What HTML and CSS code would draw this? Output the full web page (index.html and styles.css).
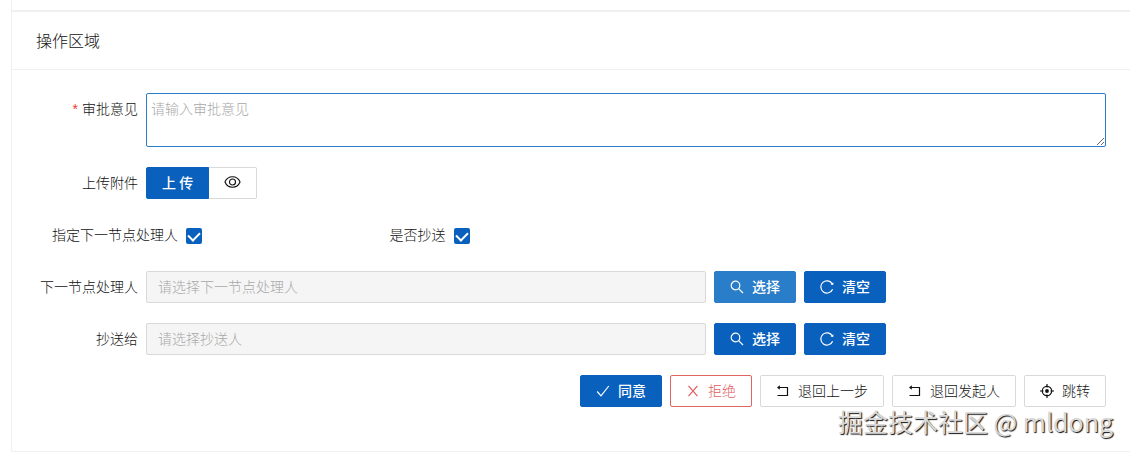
FILE: index.html
```html
<!DOCTYPE html>
<html lang="zh-CN">
<head>
<meta charset="utf-8">
<title>操作区域</title>
<link rel="stylesheet" href="styles.css">
</head>
<body>
<svg class="sprite" aria-hidden="true">
  <symbol id="i-eye" viewBox="0 0 18 18"><path d="M1 9C2.500 5.500 5.500 3.500 9 3.500S15.500 5.500 17 9C15.500 12.500 12.500 14.500 9 14.500S2.500 12.500 1 9z"/><circle cx="9" cy="9" r="3.200"/></symbol>
  <symbol id="i-search" viewBox="0 0 14 14"><circle cx="5.500" cy="5.500" r="4.300"/><path d="M8.600 8.600L13 13"/></symbol>
  <symbol id="i-reload" viewBox="0 0 14 14"><path d="M12.300 4A6.100 6.100 0 1 0 12.600 9.200"/><path d="M13.300 2.200v2.800l-2.800-.4z" fill="currentColor" stroke="none"/></symbol>
  <symbol id="i-check" viewBox="0 0 14 14"><path d="M1.200 7.500L5 11.900 12.800 2"/></symbol>
  <symbol id="i-close" viewBox="0 0 14 14"><path d="M2.500 1.800l9 10.400M11.500 1.800l-9 10.400"/></symbol>
  <symbol id="i-back" viewBox="0 0 14 14"><path d="M3 3.500h8.500v8H1.500"/><path d="M3.800 1.300v4.400L1 3.500z" fill="currentColor" stroke="none"/></symbol>
  <symbol id="i-aim" viewBox="0 0 14 14"><circle cx="7" cy="7" r="4.700"/><circle cx="7" cy="7" r="1.900" fill="currentColor" stroke="none"/><path d="M7 0v3.500M7 10.500V14M0 7h3.500M10.500 7H14"/></symbol>
</svg>

<div class="previous"></div>
<section class="card">
  <header class="card-head"><h2 class="title">操作区域</h2></header>
  <form class="form">
    <div class="row">
      <label class="label required" for="opinion">审批意见</label>
      <textarea class="opinion" id="opinion" placeholder="请输入审批意见"></textarea>
    </div>
    <div class="row">
      <span class="label" id="upload-label">上传附件</span>
      <div class="group" role="group" aria-labelledby="upload-label">
        <button class="btn primary" type="button">上 传</button>
        <button class="btn" type="button" aria-label="预览"><svg class="icon eye"><use href="#i-eye"/></svg></button>
      </div>
    </div>
    <div class="checks">
      <div class="check"><label class="label wide" for="assign">指定下一节点处理人</label><input class="box" id="assign" type="checkbox" checked></div>
      <div class="check"><label class="label wide" for="copy">是否抄送</label><input class="box" id="copy" type="checkbox" checked></div>
    </div>
    <div class="row">
      <label class="label" for="next">下一节点处理人</label>
      <div class="picker">
        <input class="field" id="next" type="text" placeholder="请选择下一节点处理人" disabled>
        <div class="actions">
          <button class="btn primary hovered" type="button"><svg class="icon"><use href="#i-search"/></svg>选择</button>
          <button class="btn primary" type="button"><svg class="icon"><use href="#i-reload"/></svg>清空</button>
        </div>
      </div>
    </div>
    <div class="row">
      <label class="label" for="cc">抄送给</label>
      <div class="picker">
        <input class="field" id="cc" type="text" placeholder="请选择抄送人" disabled>
        <div class="actions">
          <button class="btn primary" type="button"><svg class="icon"><use href="#i-search"/></svg>选择</button>
          <button class="btn primary" type="button"><svg class="icon"><use href="#i-reload"/></svg>清空</button>
        </div>
      </div>
    </div>
    <div class="footer">
      <button class="btn primary" type="button"><svg class="icon"><use href="#i-check"/></svg>同意</button>
      <button class="btn danger" type="button"><svg class="icon"><use href="#i-close"/></svg>拒绝</button>
      <button class="btn" type="button"><svg class="icon"><use href="#i-back"/></svg>退回上一步</button>
      <button class="btn" type="button"><svg class="icon"><use href="#i-back"/></svg>退回发起人</button>
      <button class="btn" type="button"><svg class="icon"><use href="#i-aim"/></svg>跳转</button>
    </div>
  </form>
  <div class="watermark">掘金技术社区 @ mldong</div>
</section>
</body>
</html>
```

FILE: styles.css
```css
* { box-sizing: border-box; }

body {
  margin: 0 0 0 11px;
  background: #fff;
  color: #111;
  font: 300 14px/22px "Noto Sans CJK SC", sans-serif;
}

.sprite { display: none; }

.previous {
  height: 10px;
  border-left: 1px solid #f0f0f0;
}

.card {
  position: relative;
  border: solid #f0f0f0;
  border-width: 2px 0 1px 1px;
}

.card-head {
  padding: 16px 24px;
  border-bottom: 1px solid #f0f0f0;
}

.title {
  margin: 0;
  font-size: 16px;
  font-weight: 300;
  line-height: 25px;
}

.form {
  display: flex;
  flex-direction: column;
  gap: 20px;
  padding: 23px 24px 44px;
}

.row { display: flex; }

.label {
  flex: 0 0 110px;
  padding-right: 8px;
  line-height: 30px;
  text-align: right;
  white-space: nowrap;
}

.wide {
  flex-basis: 150px;
  padding-bottom: 2px;
}

.required::before {
  content: "*";
  margin-right: 4px;
  color: #e8382f;
  font-family: "Liberation Sans", sans-serif;
}

.opinion,
.field {
  flex: 1;
  min-width: 0;
  margin: 0;
  border-radius: 2px;
  font: inherit;
  outline: none;
}

.opinion {
  height: 54px;
  padding: 4px;
  border: 1px solid #2a7dc9;
  line-height: 20px;
}

.field {
  height: 32px;
  padding: 3px 11px 5px;
  border: 1px solid #d9d9d9;
  background: #f5f5f5;
}

.opinion::placeholder,
.field::placeholder { color: #a8a8a8; }

.checks {
  display: grid;
  grid-template-columns: repeat(4, 1fr);
}

.check {
  display: flex;
  align-items: center;
}

.box {
  display: grid;
  place-items: center;
  width: 16px;
  height: 16px;
  margin: 2px 0 0;
  border-radius: 2px;
  background: #0960bd;
  appearance: none;
}

.box:checked::after {
  content: "";
  width: 6px;
  height: 9px;
  border: solid #fff;
  border-width: 0 2px 2px 0;
  transform: rotate(45deg) translate(-1px, -1px);
}

.picker {
  display: grid;
  flex: 1;
  grid-template-columns: 7fr 5fr;
}

.actions,
.footer {
  display: flex;
  gap: 8px;
}

.actions { padding-left: 8px; }
.footer { justify-content: flex-end; }
.group { display: flex; }

.btn {
  display: flex;
  align-items: center;
  gap: 8px;
  height: 32px;
  margin: 0;
  padding: 0 15px 2px;
  border: 1px solid #d9d9d9;
  border-radius: 2px;
  background: #fff;
  color: inherit;
  font: inherit;
  white-space: nowrap;
}

.primary {
  border-color: #0960bd;
  background: #0960bd;
  color: #fff;
  font-weight: 500;
}

.hovered {
  border-color: #2a7dc9;
  background: #2a7dc9;
}

.danger {
  border-color: #e0645f;
  color: #e0605f;
}

.group .primary { border-radius: 2px 0 0 2px; }
.group .btn + .btn { border-left: 0; border-radius: 0 2px 2px 0; }

.icon {
  width: 14px;
  height: 14px;
  margin-top: 2px;
  fill: none;
  stroke: currentColor;
  stroke-width: 1.2;
}

.eye {
  width: 17px;
  height: 18px;
  margin-top: 0;
}

.watermark {
  position: absolute;
  right: 17px;
  bottom: 12px;
  color: #d9d9d9;
  font-size: 25px;
  font-weight: 400;
  line-height: 36px;
  text-shadow: 1px 1px 1px #111;
  pointer-events: none;
}
```
